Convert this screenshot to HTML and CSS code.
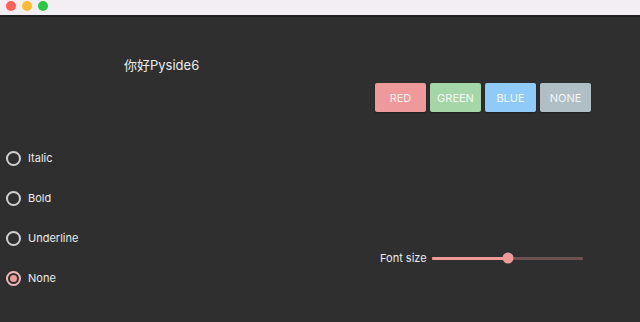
FILE: index.html
```html
<!DOCTYPE html>
<html>
<head>
<meta charset="utf-8">
<link rel="stylesheet" href="styles.css">
</head>
<body>
<div class="window">
  <div class="titlebar">
    <span class="dot red"></span>
    <span class="dot yellow"></span>
    <span class="dot green"></span>
  </div>
  <div class="content">
    <div class="left">
      <div class="title">你好Pyside6</div>
      <div class="radios">
        <label class="radio"><span class="circle"></span><span>Italic</span></label>
        <label class="radio"><span class="circle"></span><span>Bold</span></label>
        <label class="radio"><span class="circle"></span><span>Underline</span></label>
        <label class="radio checked"><span class="circle"></span><span>None</span></label>
      </div>
    </div>
    <div class="right">
      <div class="buttons">
        <button class="btn b-red">RED</button>
        <button class="btn b-green">GREEN</button>
        <button class="btn b-blue">BLUE</button>
        <button class="btn b-none">NONE</button>
      </div>
      <div class="slider-row">
        <span class="slider-label">Font size</span>
        <div class="track">
          <div class="fill" style="width:50%"></div>
          <div class="handle" style="left:50%"></div>
        </div>
      </div>
    </div>
  </div>
</div>
</body>
</html>
```
FILE: styles.css
```css
* { box-sizing: border-box; }
html, body { margin: 0; padding: 0; }
body {
  width: 640px;
  height: 322px;
  background: #2f2f2f;
  font-family: Inter, "Noto Sans CJK SC", sans-serif;
  color: #e6e6e6;
  overflow: hidden;
}
.window { display: flex; flex-direction: column; height: 322px; }
.titlebar {
  height: 17px;
  background: #f3eef3;
  border-bottom: 2px solid #1f1f1f;
  display: flex;
  align-items: center;
  padding-left: 6px;
  gap: 6px;
  padding-bottom: 3px;
}
.dot { width: 10px; height: 10px; border-radius: 50%; display: block; }
.dot.red { background: #fe5f57; }
.dot.yellow { background: #febc2e; }
.dot.green { background: #28c840; }
.content { display: flex; flex: 1; }
.left { width: 320px; padding-top: 40px; }
.title {
  padding-left: 124px;
  font-size: 13px;
  line-height: 16px;
  height: 16px;
  color: #ececec;
}
.radios { margin-top: 65px; display: flex; flex-direction: column; }
.radio {
  display: flex;
  align-items: center;
  height: 40px;
  padding-left: 6px;
  gap: 7px;
  font-size: 11px;
  color: #ececec;
}
.circle {
  width: 15px;
  height: 15px;
  border-radius: 50%;
  border: 2px solid #cfcfcf;
  display: flex;
  align-items: center;
  justify-content: center;
}
.radio.checked .circle { border-color: #f0b9b9; }
.radio.checked .circle::after {
  content: "";
  width: 7px;
  height: 7px;
  border-radius: 50%;
  background: #ef9a9a;
}
.right { width: 320px; padding-top: 66px; }
.buttons { display: flex; gap: 4px; padding-left: 55px; }
.btn {
  width: 51px;
  height: 29px;
  border: none;
  border-radius: 2px;
  font-family: Inter, sans-serif;
  font-size: 11px;
  color: rgba(255, 255, 255, 0.88);
  padding: 0;
  box-shadow: 0 1px 2px rgba(0, 0, 0, 0.4);
}
.b-red { background: #ef9a9a; }
.b-green { background: #a5d6a7; }
.b-blue { background: #90caf9; }
.b-none { background: #b0bec5; }
.slider-row {
  display: flex;
  align-items: center;
  height: 20px;
  margin-top: 136px;
  padding-left: 60px;
}
.slider-label { width: 52px; font-size: 11px; color: #ececec; }
.track {
  position: relative;
  width: 151px;
  height: 3px;
  background: #6a5252;
  border-radius: 1px;
}
.fill { height: 3px; background: #ef9a9a; border-radius: 1px; }
.handle {
  position: absolute;
  top: 50%;
  width: 11px;
  height: 11px;
  border-radius: 50%;
  background: #ef9a9a;
  transform: translate(-50%, -50%);
}
```
